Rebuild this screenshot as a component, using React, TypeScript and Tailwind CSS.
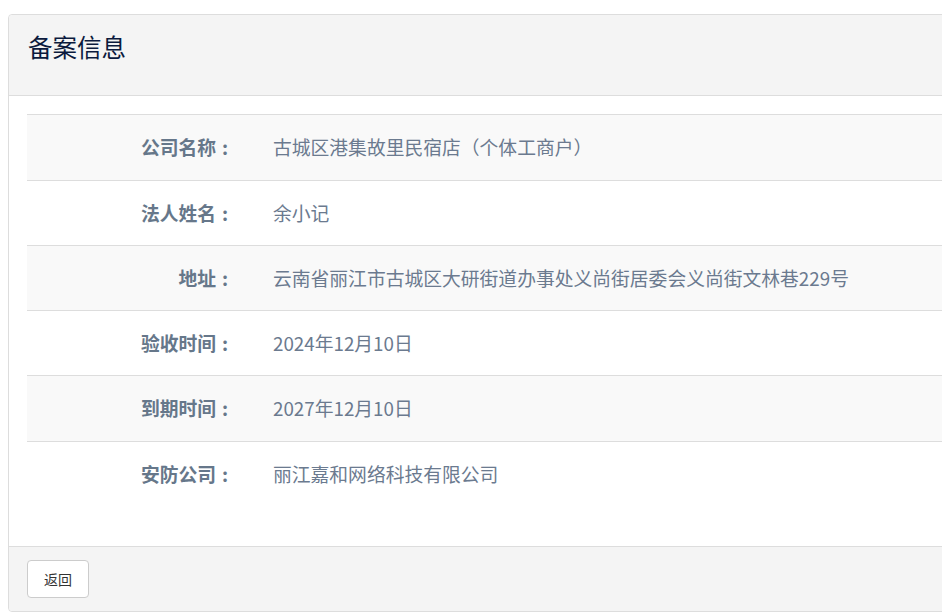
import React from "react";

const rows: [string, string, string][] = [
  ["公司名称", "古城区港集故里民宿店（个体工商户）", "h-[66px]"],
  ["法人姓名", "余小记", "h-[65px]"],
  ["地址", "云南省丽江市古城区大研街道办事处义尚街居委会义尚街文林巷229号", "h-[65px]"],
  ["验收时间", "2024年12月10日", "h-[65px]"],
  ["到期时间", "2027年12月10日", "h-[66px]"],
  ["安防公司", "丽江嘉和网络科技有限公司", "h-[65px]"],
];

export default function App() {
  return (
    <div
      className="w-[942px] h-[612px] overflow-hidden bg-white pt-[14px] pl-[8px]"
      style={{ fontFamily: '"Microsoft YaHei", "Noto Sans CJK SC", "Noto Sans", sans-serif' }}
    >
      <div className="w-[960px] border border-[#dddddd] rounded-tl-[4px] rounded-bl-[4px] bg-white">
        <div className="h-[81px] bg-[#f4f4f4] border-b border-[#dddddd] pl-[19px] pt-[17px] rounded-tl-[4px]">
          <h1 className="text-[24.5px] leading-[30px] text-[#0b1a3d] font-normal">备案信息</h1>
        </div>
        <div className="pt-[18px] pl-[18px] pb-[40px]">
          <div className="flex flex-col">
            {rows.map(([label, value, h], i) => (
              <div
                key={i}
                className={`flex items-center ${h} border-t border-[#dddddd] ${
                  i % 2 === 0 ? "bg-[#f9f9f9]" : "bg-white"
                }`}
              >
                <div className="w-[207px] flex justify-end items-center text-[18.8px] font-bold text-[#66778a]">
                  <span>{label}</span>
                  <span className="inline-block w-[18px] text-center">:</span>
                </div>
                <div className="pl-[39px] text-[18.8px] text-[#6b7a8f]">{value}</div>
              </div>
            ))}
          </div>
        </div>
        <div className="h-[65px] bg-[#f4f4f4] border-t border-[#dddddd] flex items-center pl-[18px] rounded-bl-[4px]">
          <button className="w-[62px] h-[38px] bg-white border border-[#cccccc] rounded-[4px] text-[14px] text-[#333333]">
            返回
          </button>
        </div>
      </div>
    </div>
  );
}
